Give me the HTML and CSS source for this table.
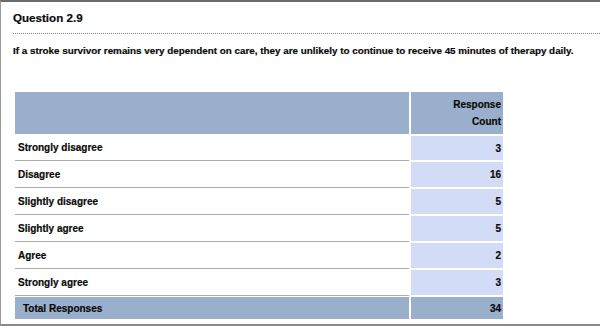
FILE: index.html
```html
<!DOCTYPE html>
<html>
<head>
<meta charset="utf-8">
<link rel="stylesheet" href="styles.css">
</head>
<body>
<div class="panel">
  <h2 class="q-title">Question 2.9</h2>
  <p class="q-text">If a stroke survivor remains very dependent on care, they are unlikely to continue to receive 45 minutes of therapy daily.</p>
  <table class="results">
    <thead>
      <tr>
        <th class="label-head"></th>
        <th class="count-head">Response<br>Count</th>
      </tr>
    </thead>
    <tbody>
      <tr><td class="label">Strongly disagree</td><td class="count">3</td></tr>
      <tr><td class="label">Disagree</td><td class="count">16</td></tr>
      <tr><td class="label">Slightly disagree</td><td class="count">5</td></tr>
      <tr><td class="label">Slightly agree</td><td class="count">5</td></tr>
      <tr><td class="label">Agree</td><td class="count">2</td></tr>
      <tr><td class="label">Strongly agree</td><td class="count">3</td></tr>
    </tbody>
    <tfoot>
      <tr><td class="total-label">Total Responses</td><td class="total-count">34</td></tr>
    </tfoot>
  </table>
</div>
</body>
</html>
```

FILE: styles.css
```css
html, body {
  margin: 0;
  padding: 0;
  background: #fff;
}

body {
  font-family: "Liberation Sans", Arial, Helvetica, sans-serif;
  color: #0a0a0a;
  -webkit-text-stroke: 0.2px #0a0a0a;
}

.panel {
  box-sizing: border-box;
  width: 620px;
  height: 326px;
  border-top: 2px solid #6a6a6a;
  border-left: 1px solid #9a9a9a;
  border-bottom: 2px solid #8a8a8a;
  padding: 9px 0 0 12px;
}

.q-title {
  margin: 0;
  font-size: 11.6px;
  font-weight: bold;
  line-height: 14px;
  padding-bottom: 8px;
  border-bottom: 1px dotted #8a8a8a;
}

.q-text {
  margin: 11px 0 0 0;
  font-size: 9.85px;
  font-weight: bold;
  line-height: 12px;
}

.results {
  margin: 35px 0 0 2px;
  border-collapse: separate;
  border-spacing: 0;
  width: 488px;
  font-size: 10px;
  font-weight: bold;
}

.results th {
  background: #9aafcb;
  height: 42px;
  padding: 0;
  font-weight: bold;
}

.label-head {
  width: 394px;
}

.count-head {
  border-left: 2px solid #fff;
  text-align: right;
  line-height: 17px;
  padding-right: 2px !important;
  vertical-align: middle;
}

.label {
  height: 26px;
  padding: 0 0 0 3px;
  border-bottom: 1px solid #acacac;
}

.count {
  background: #d3dcf7;
  border-left: 2px solid #fff;
  border-top: 1px solid #fff;
  border-bottom: 1px solid #fff;
  text-align: right;
  padding: 0 2px 0 0;
}

.results tbody tr:first-child .count {
  border-top: 2px solid #fff;
}

.total-label,
.total-count {
  background: #9aafcb;
  height: 22px;
  padding: 0;
}

.total-label {
  padding-left: 8px;
  border-top: 1px solid #fff;
}

.total-count {
  border-left: 2px solid #fff;
  border-top: 1px solid #fff;
  text-align: right;
  padding-right: 2px;
}
```
